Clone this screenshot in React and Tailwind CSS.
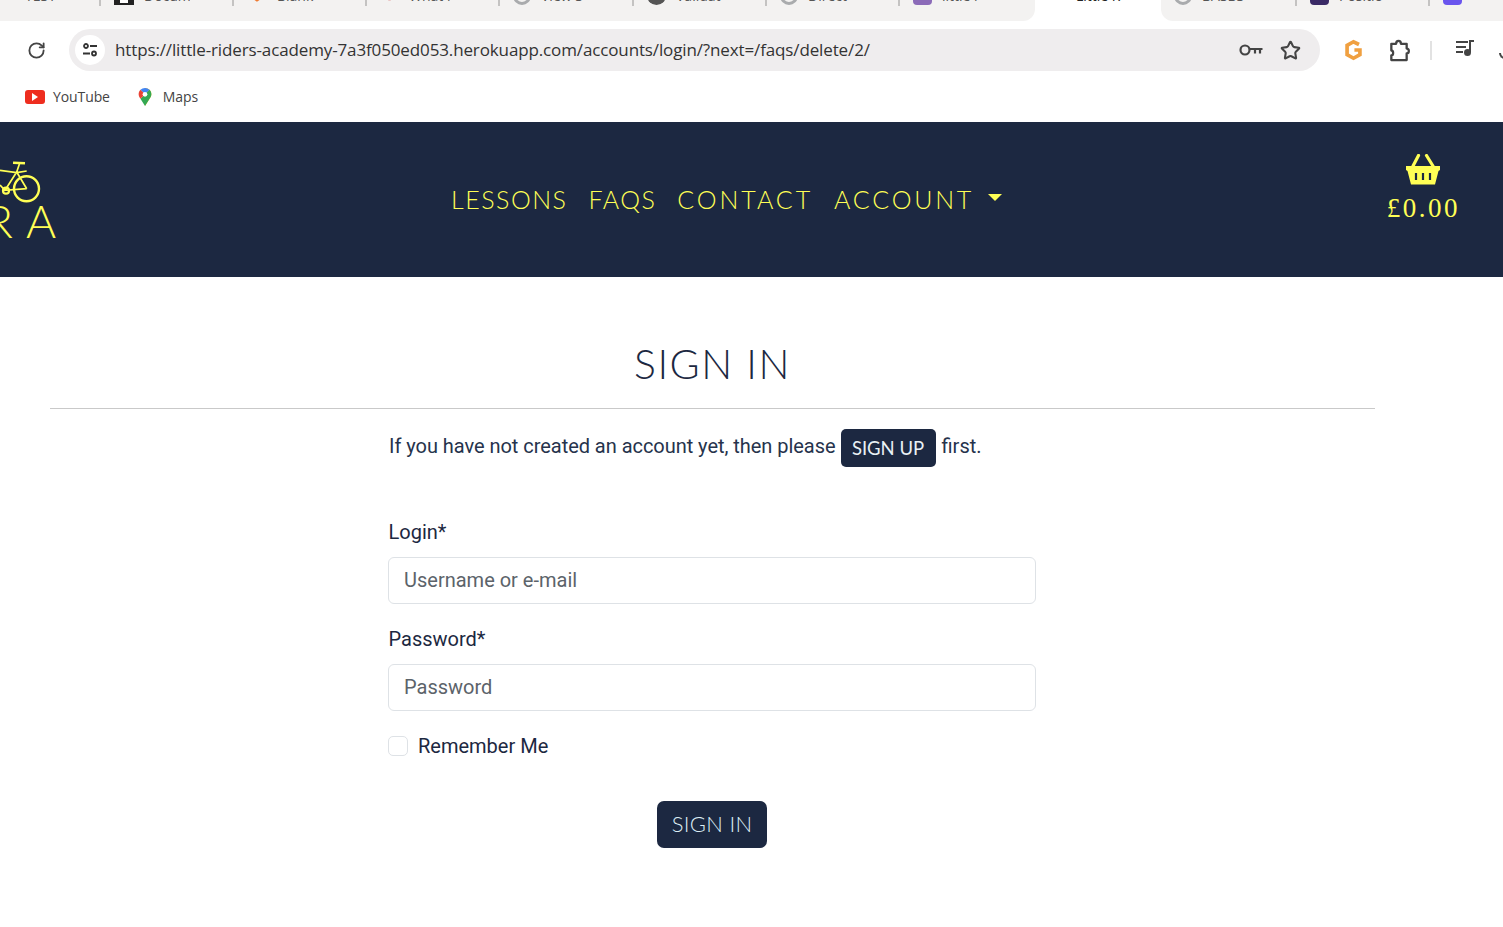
import { RotateCw, Star } from 'lucide-react'

const tabs = [
    { label: 'TEST', w: 101, icon: 'dot', pad: 'pl-[11px]' },
    { label: 'Docum', w: 133, icon: 'dark' },
    { label: 'Blank', w: 133, icon: 'orange' },
    { label: 'What i', w: 133, icon: 'red' },
    { label: 'View S', w: 134, icon: 'globe' },
    { label: 'Validat', w: 133, icon: 'black' },
    { label: 'Direct', w: 133, icon: 'globe' },
    { label: 'little r', w: 135, icon: 'purple', last: true },
]
const tabsRight = [
    { label: 'BASBS', w: 136, icon: 'globe' },
    { label: 'Positio', w: 133, icon: 'navy' },
    { label: 'Devel', w: 73, icon: 'violet', last: true },
]

function TabIcon({ type }) {
    if (type === 'dot') return <span className="w-1 h-1 rounded-full bg-[#444] shrink-0" />
    if (type === 'orange') {
        return (
            <svg viewBox="0 0 20 20" className="w-[20px] h-[20px] shrink-0" fill="none" stroke="#ee7b33" strokeWidth="3">
                <path d="M2 8l8 6 7-5" />
            </svg>
        )
    }
    if (type === 'globe') {
        return <span className="w-[18px] h-[18px] shrink-0 rounded-full border-[3px] border-[#a9abad]" />
    }
    if (type === 'dark') {
        return (
            <span className="w-[20px] h-[19px] shrink-0 bg-[#222] flex items-end justify-center pb-[2px]">
                <span className="w-[8px] h-[4px] bg-white" />
            </span>
        )
    }
    const colors = {
        red: 'bg-[#cc4444] rounded-full scale-50',
        black: 'bg-[#555] rounded-full',
        purple: 'bg-[#8b6bb8] rounded-sm',
        navy: 'bg-[#3a2a66] rounded-sm',
        violet: 'bg-[#6a55ee] rounded-sm',
    }
    return <span className={`w-[19px] h-[19px] shrink-0 ${colors[type]}`} />
}

function Tab({ tab }) {
    return (
        <div style={{ width: tab.w }} className="shrink-0 h-[21px] flex overflow-hidden">
            <div className={`flex-1 min-w-0 flex items-center gap-[10px] h-[19px] mt-[-14px] pr-[19px] ${tab.pad || 'pl-[13px]'}`}>
                <TabIcon type={tab.icon} />
                <span className="text-[14px] text-[#555] font-['Open_Sans',sans-serif] w-[46px] overflow-hidden whitespace-nowrap">{tab.label}</span>
                <span className="ml-auto text-[14px] text-[#555] font-['Open_Sans',sans-serif]">×</span>
            </div>
            {!tab.last && <div className="w-[2px] h-[6px] bg-[#c4c3c2] shrink-0" />}
        </div>
    )
}

function MapsPin() {
    return (
        <svg viewBox="0 0 16 22" className="w-[16px] h-[20px]">
            <path d="M8 1a7 7 0 0 1 7 7c0 2-1 3.500-2 5l-5 8z" fill="#fbbc04" />
            <path d="M3 13l5-5 5-5c1.300 1.300 2 3 2 5 0 2-1 3.500-2 5l-5 8z" fill="#34a853" />
            <path d="M3 3a7 7 0 0 1 5-2 7 7 0 0 1 5 2L8 8z" fill="#4285f4" />
            <path d="M3 3l5 5-5 5c-1-1.500-2-3-2-5 0-2 .7-3.700 2-5z" fill="#ea4335" />
            <circle cx="8" cy="8" r="2.600" fill="#fff" />
        </svg>
    )
}

function Bike() {
    return (
        <svg viewBox="0 0 44 44" className="w-[44px] h-[44px] shrink-0" fill="none" stroke="#ffff55" strokeWidth="1.700">
            <circle cx="26.500" cy="28.700" r="12.500" strokeWidth="2.400" />
            <circle cx="6" cy="30.700" r="3" strokeWidth="2.200" />
            <path d="M13 2.700l12 .6" strokeWidth="2.400" />
            <path d="M19.500 3.700L16.700 12M0 10.300l16.700 2.400L26.700 11M16.700 12L5 30.300l21.700-1.600M16.700 12l10 16.700M0 25l5 5.300" />
        </svg>
    )
}

function Basket() {
    return (
        <svg viewBox="0 0 36 32" className="w-[36px] h-[32px] shrink-0">
            <path d="M13.500 1.500L8 12M21.500 1.500L28 12" stroke="#ffff55" strokeWidth="3.200" strokeLinecap="round" fill="none" />
            <path d="M1 12h34v4l-1.500 1-3.500 13.500h-24L2.500 17 1 16z" fill="#ffff55" />
            <path d="M11 19v7M18 19v7M25 19v7" stroke="#1c2841" strokeWidth="2.200" />
        </svg>
    )
}

const navFont = "font-['Lato',sans-serif]"

export default function App() {
    return (
        <div className="min-h-[927px] bg-white overflow-hidden font-['Roboto',sans-serif] text-[#1c2841]">
            {/* browser tabs */}
            <div className="h-[21px] flex overflow-hidden">
                <div className="flex bg-[#f3f2f1] rounded-br-[12px] overflow-hidden">
                    {tabs.map((t, i) => <Tab key={i} tab={t} />)}
                </div>
                <div className="w-[126px] shrink-0 overflow-hidden flex items-center h-[19px] mt-[-14px] pl-[41px] text-[14px] text-[#222] font-['Open_Sans',sans-serif] whitespace-nowrap">
                    Little R
                </div>
                <div className="flex bg-[#f3f2f1] rounded-bl-[12px] overflow-hidden">
                    {tabsRight.map((t, i) => <Tab key={i} tab={t} />)}
                </div>
            </div>

            {/* address bar */}
            <div className="h-[59px] pb-[1px] flex items-center pl-[27px]">
                <RotateCw size={19} strokeWidth={2.300} className="text-[#444] shrink-0" />
                <div className="ml-[23px] w-[1251px] shrink-0 h-[42px] rounded-full bg-[#efedee] flex items-center pl-[6px] pr-[19px]">
                    <div className="w-[30px] h-[30px] rounded-full bg-white flex items-center justify-center shrink-0">
                        <svg viewBox="0 0 16 16" className="w-[16px] h-[16px]" fill="none" stroke="#333" strokeWidth="1.800">
                            <circle cx="4" cy="4" r="2" />
                            <path d="M8 4h7M1 11.500h7" />
                            <circle cx="12" cy="11.500" r="2" />
                        </svg>
                    </div>
                    <span className="ml-[10px] text-[17px] tracking-[-0.13px] text-[#333] font-['Open_Sans',sans-serif] whitespace-nowrap">https://little-riders-academy-7a3f050ed053.herokuapp.com/accounts/login/?next=/faqs/delete/2/</span>
                    <svg viewBox="0 0 24 12" className="ml-auto w-[24px] h-[12px] shrink-0" fill="none" stroke="#444" strokeWidth="2.200">
                        <circle cx="6" cy="6" r="4.500" />
                        <path d="M10.500 5h13M16 5v4.500M21 5v4.500" />
                    </svg>
                    <Star size={21} strokeWidth={2.400} className="ml-[17px] text-[#444] shrink-0" />
                </div>
                <svg viewBox="0 0 20 24" className="ml-[23px] w-[21px] h-[22px] shrink-0" fill="none" stroke="#f0a040" strokeWidth="4">
                    <path d="M16 6l-6-3-7 4v10l7 4 7-4v-5h-6" />
                </svg>
                <svg viewBox="0 0 22 24" className="ml-[24px] w-[22px] h-[23px] shrink-0" fill="none" stroke="#444" strokeWidth="2.400" strokeLinejoin="round">
                    <path d="M3 5h5c0-4 5-4 5 0h6v5c3 0 3 5 0 5v7H3v-5c2.500 0 2.500-5 0-5z" />
                </svg>
                <div className="ml-[20px] w-[2px] h-[19px] bg-[#e2e2e2] shrink-0" />
                <svg viewBox="0 0 20 18" className="ml-[23px] w-[20px] h-[18px] shrink-0 mt-[-4px]" stroke="#444" strokeWidth="2" fill="#444">
                    <path d="M1 3h12M1 8h10M1 13h7M15 13V2h4" fill="none" />
                    <circle cx="12.500" cy="13.500" r="2.500" />
                </svg>
                <span className="ml-[24px] w-[6px] h-[6px] mt-[12px] border-l-2 border-b-2 border-[#444] rounded-bl-md shrink-0" />
            </div>

            {/* bookmarks */}
            <div className="h-[42px] pl-[25px] pb-[9px] flex items-center text-[14px] text-[#444] font-['Open_Sans',sans-serif] tracking-[-0.1px]">
                <span className="w-[20px] h-[14px] rounded-[3px] bg-[#ee2d1f] flex items-center justify-center">
                    <span className="border-l-[6px] border-l-white border-y-[4px] border-y-transparent" />
                </span>
                <span className="ml-[8px]">YouTube</span>
                <span className="ml-[27px] flex"><MapsPin /></span>
                <span className="ml-[10px]">Maps</span>
            </div>

            {/* site nav */}
            <nav className={`h-[155px] bg-[#1c2841] text-[#ffff55] flex overflow-hidden ${navFont}`}>
                <div className="w-[451px] shrink-0 pt-[38px]">
                    <Bike />
                    <div className="text-[46px] leading-[46px] ml-[-15px] tracking-[1px] mt-[-6px] font-light whitespace-nowrap">R A</div>
                </div>
                <div className="flex items-center gap-[21px] text-[25px] font-light leading-none">
                    <span className="tracking-[1.500px]">LESSONS</span>
                    <span className="tracking-[1.500px]">FAQS</span>
                    <span className="tracking-[2.900px]">CONTACT</span>
                    <span className="flex items-center tracking-[2.800px]">
                        ACCOUNT
                        <span className="ml-[14px] mt-[-4px] border-t-[7px] border-t-[#ffff55] border-x-[7px] border-x-transparent" />
                    </span>
                </div>
                <div className="ml-auto mr-[43px] flex flex-col items-center pt-[32px]">
                    <Basket />
                    <span className="text-[27px] leading-[30px] tracking-[2.500px] mt-[7px] font-['Liberation_Serif',serif]">£0.00</span>
                </div>
            </nav>

            {/* page content */}
            <main className="w-[1425px] px-[50px]">
                <h1 className={`text-center text-[41px] font-light leading-[50px] pt-[62px] pb-[19px] tracking-[1.500px] border-b border-[#c9c9c9] ${navFont}`}>SIGN IN</h1>
                <div className="w-[648px] ml-[338px] mt-[20px]">
                    <div className="flex h-[38px] pl-[1px] text-[20px] leading-[34px] text-[#26334c] whitespace-nowrap">
                        <span className="tracking-[-0.04px]">If you have not created an account yet, then please</span>
                        <a className={`ml-[5px] mr-[6px] h-[38px] w-[95px] bg-[#1c2841] text-[#e9f1f5] rounded-[5px] text-center text-[18.500px] leading-[38px] ${navFont}`}>SIGN UP</a>
                        <span>first.</span>
                    </div>
                    <form className="mt-[50px]">
                        <label className="block text-[20px] leading-[30px] pl-[0.500px] mb-[10px]">Login*</label>
                        <div className="h-[47px] rounded-[6px] border border-[#dee2e6] pl-[15px] pb-[1px] flex items-center text-[20px] text-[#5c636a]">Username or e-mail</div>
                        <label className="block text-[20px] leading-[30px] pl-[0.500px] mt-[20px] mb-[10px]">Password*</label>
                        <div className="h-[47px] rounded-[6px] border border-[#dee2e6] pl-[15px] pb-[1px] flex items-center text-[20px] text-[#5c636a]">Password</div>
                        <div className="flex items-center mt-[20px] h-[30px]">
                            <span className="w-[20px] h-[20px] rounded-[5px] border border-[#dee2e6] bg-white" />
                            <span className="ml-[10px] text-[20px]">Remember Me</span>
                        </div>
                        <div className="flex justify-center mt-[40px]">
                            <button type="button" className={`w-[110px] h-[47px] pb-[2px] bg-[#1c2841] text-[#dceef5] rounded-[7px] text-[22px] font-light tracking-[0.3px] ${navFont}`}>SIGN IN</button>
                        </div>
                    </form>
                </div>
            </main>
        </div>
    )
}
